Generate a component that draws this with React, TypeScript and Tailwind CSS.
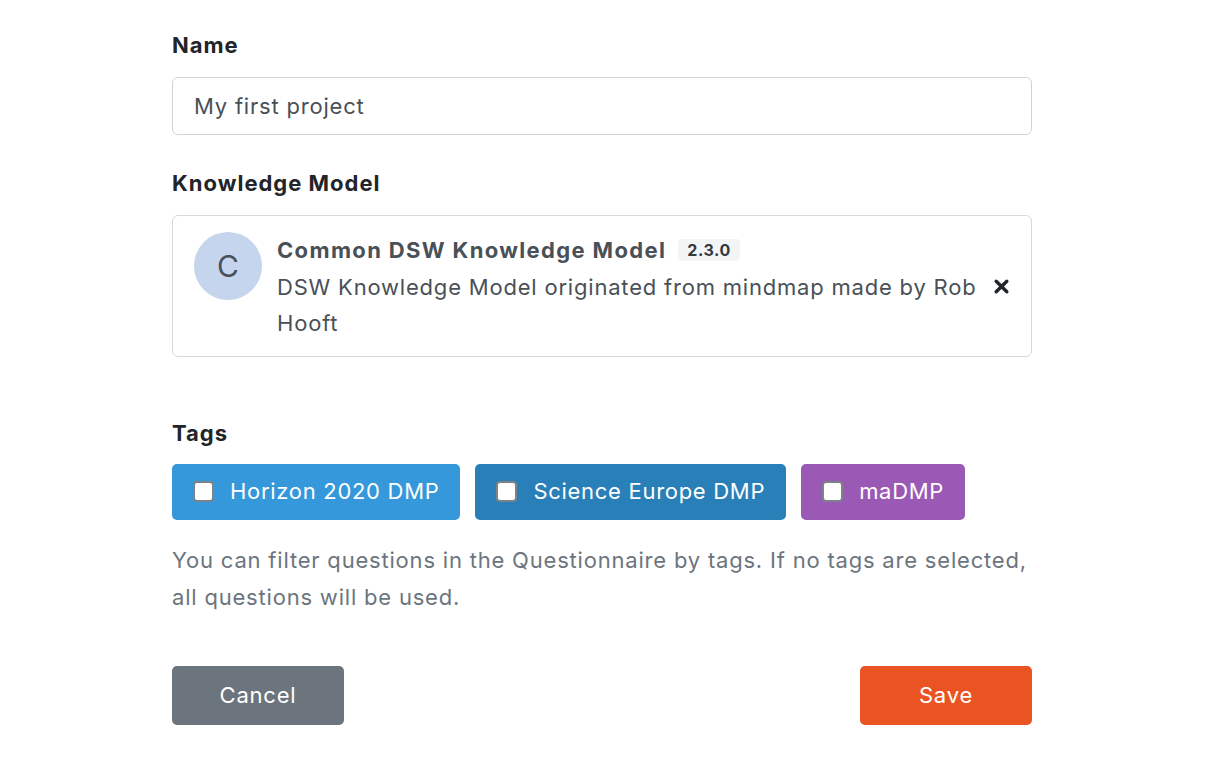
import { useState } from "react";

const tags = [
  { name: "Horizon 2020 DMP", color: "bg-[#3498db]" },
  { name: "Science Europe DMP", color: "bg-[#2980b9]" },
  { name: "maDMP", color: "bg-[#9b59b6]" },
];

export default function App() {
  const [name, setName] = useState("My first project");
  const [selected, setSelected] = useState<string[]>([]);

  function toggle(tag: string) {
    setSelected((s) => (s.includes(tag) ? s.filter((t) => t !== tag) : [...s, tag]));
  }

  return (
    <div className="min-h-[760px] bg-white font-['Inter','Liberation_Sans',sans-serif] text-[22px] tracking-[0.8px] text-[#212529]">
      <div className="ml-[172px] w-[860px] pt-[30px]">
        <label className="block font-bold tracking-[1px] leading-[30px] mb-[17px]">Name</label>
        <input
          value={name}
          onChange={(e) => setName(e.target.value)}
          className="block w-full h-[58px] rounded-[6px] border border-[#ced4da] px-[21px] text-[22px] tracking-[0.8px] text-[#495057] outline-none"
        />

        <label className="block font-bold tracking-[1px] leading-[30px] mt-[33px] mb-[17px]">Knowledge Model</label>
        <div className="flex items-start rounded-[6px] border border-[#d6dae0] pl-[21px] pr-[21px] pt-[16px] pb-[14px]">
          <div className="flex h-[68px] w-[68px] shrink-0 items-center justify-center rounded-full bg-[#c5d5ee] text-[30px] tracking-normal text-[#495057]">
            C
          </div>
          <div className="ml-[15px] flex-1 leading-[36.5px] text-[#495057]">
            <div className="flex items-center">
              <span className="font-bold tracking-[1.35px]">Common DSW Knowledge Model</span>
              <span className="ml-[12px] rounded-[4px] bg-[#f3f4f6] px-[9px] text-[16px] font-bold leading-[22px] tracking-[0.6px] text-[#343a40]">
                2.3.0
              </span>
            </div>
            <div>DSW Knowledge Model originated from mindmap made by Rob Hooft</div>
          </div>
          <button className="self-center ml-[12px] text-[#212529]">
            <svg width="17" height="17" viewBox="0 0 16 16">
              <path d="M3 3 L13 13 M13 3 L3 13" stroke="currentColor" strokeWidth="3.2" strokeLinecap="round" />
            </svg>
          </button>
        </div>

        <label className="block font-bold tracking-[1px] leading-[30px] mt-[61px] mb-[16px]">Tags</label>
        <div className="flex gap-[15px]">
          {tags.map((t) => (
            <label
              key={t.name}
              className={`flex h-[56px] cursor-pointer items-center rounded-[5px] pl-[21px] pr-[21px] tracking-[0.7px] text-white ${t.color}`}
            >
              <input
                type="checkbox"
                checked={selected.includes(t.name)}
                onChange={() => toggle(t.name)}
                className="h-[21px] w-[21px] appearance-none rounded-[4px] border-2 border-[#7d8288] bg-white checked:bg-[#0d6efd]"
              />
              <span className="ml-[16px]">{t.name}</span>
            </label>
          ))}
        </div>

        <p className="mt-[22px] leading-[37px] text-[#6c757d]">
          You can filter questions in the Questionnaire by tags. If no tags are selected, all questions will be used.
        </p>

        <div className="mt-[50px] flex justify-between">
          <button className="h-[59px] w-[172px] rounded-[5px] bg-[#6c757d] text-white">Cancel</button>
          <button className="h-[59px] w-[172px] rounded-[5px] bg-[#ea5422] text-white">Save</button>
        </div>
      </div>
    </div>
  );
}
